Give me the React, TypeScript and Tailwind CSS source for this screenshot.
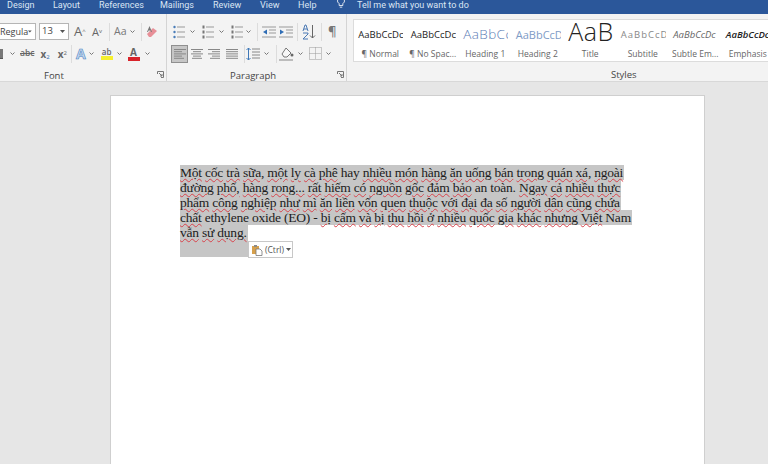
import React from 'react';

const tabs = [
  { label: 'Design', cls: 'w-[46px]' },
  { label: 'Layout', cls: 'w-[46px]' },
  { label: 'References', cls: 'w-[61px]' },
  { label: 'Mailings', cls: 'w-[53px]' },
  { label: 'Review', cls: 'w-[47px]' },
  { label: 'View', cls: 'w-[38px]' },
  { label: 'Help', cls: 'w-[38px]' },
];

const styleItems = [
  { sample: 'AaBbCcDc', label: '¶ Normal', cls: 'pt-[2px] text-[9.5px] text-[#222]' },
  { sample: 'AaBbCcDc', label: '¶ No Spac...', cls: 'pt-[2px] text-[9.5px] text-[#222]' },
  { sample: 'AaBbCc', label: 'Heading 1', cls: 'pt-[1px] text-[13.5px] font-light text-[#5b7db5] tracking-[0.4px]' },
  { sample: 'AaBbCcD', label: 'Heading 2', cls: 'pt-[1px] text-[11px] text-[#7e9bc6]' },
  { sample: 'AaB', label: 'Title', cls: 'pb-[6px] text-[25px] font-light text-[#222] tracking-[0.5px]' },
  { sample: 'AaBbCcD', label: 'Subtitle', cls: 'pt-[2px] text-[9.5px] text-[#888] tracking-[1px]' },
  { sample: 'AaBbCcDc', label: 'Subtle Em...', cls: 'pt-[2px] text-[9.5px] text-[#666] italic' },
  { sample: 'AaBbCcDc', label: 'Emphasis', cls: 'pt-[2px] text-[9.5px] text-[#222] italic font-semibold' },
];

const lines = [
  'Một cốc trà sữa, một ly cà phê hay nhiều món hàng ăn uống bán trong quán xá, ngoài',
  'đường phố, hàng rong... rất hiếm có nguồn gốc đảm bảo an toàn. Ngay cả nhiều thực',
  'phẩm công nghiệp như mì ăn liền vốn quen thuộc với đại đa số người dân cũng chứa',
  'chất ethylene oxide (EO) - bị cấm và bị thu hồi ở nhiều quốc gia khác nhưng Việt Nam',
  'vẫn sử dụng.',
];

// words the spell checker leaves alone
const plain = ['hay', 'ethylene', 'oxide', '(EO)', '-', 'Nam', 'an', 'toàn.'];

const Chev = ({ cls = '' }: { cls?: string }) => (
  <svg width="7" height="4" viewBox="0 0 7 4" className={`shrink-0 ${cls}`}>
    <path d="M1.500 .5 3.500 2.500 5.500 .5" fill="none" stroke="#777" strokeWidth="1" />
  </svg>
);

const Sep = ({ cls = '' }: { cls?: string }) => <div className={`h-[18px] w-px shrink-0 bg-[#dcdcdc] ${cls}`} />;

// small list glyph used by the paragraph buttons
const ListIcon = ({ cls = '', nums = false }: { cls?: string; nums?: boolean }) => (
  <svg width="14" height="14" viewBox="0 0 14 14" className={`shrink-0 ${cls}`}>
    {[2, 7, 12].map((y) => (
      <g key={y}>
        {nums ? (
          <rect x="1.500" y={y - 1.5} width="2" height="3" fill="#777" />
        ) : (
          <circle cx="2.500" cy={y} r="1.200" fill="#4a7db8" />
        )}
        <path d={`M5 ${y}h8`} stroke="#999" strokeWidth="1" />
      </g>
    ))}
  </svg>
);

const AlignIcon = ({ rows, cls = '' }: { rows: string[]; cls?: string }) => (
  <svg width="14" height="12" viewBox="0 0 14 12" className={`shrink-0 ${cls}`}>
    {rows.map((d, i) => (
      <path key={i} d={`M${d}`} transform={`translate(0 ${i * 2.2 + 1.5})`} stroke="#888" strokeWidth="1" />
    ))}
  </svg>
);

const IndentIcon = ({ cls = '', flip = false }: { cls?: string; flip?: boolean }) => (
  <svg width="14" height="12" viewBox="0 0 14 12" className={`shrink-0 ${cls}`}>
    <path d="M0 1h14M7 4h7M7 7h7M0 11h14" stroke="#999" strokeWidth="1" />
    <path d={flip ? 'M1 3.500 5 6 1 8.500z' : 'M5 3.500 1 6 5 8.500z'} fill="#2f6db5" />
  </svg>
);

const Launcher = () => (
  <svg width="7" height="7" viewBox="0 0 7 7" className="absolute right-[2px] bottom-[3px]">
    <path d="M.5 3V.5H6.500V6.500H4M2 2l3 3M5 3v2H3" fill="none" stroke="#777" strokeWidth="1" />
  </svg>
);

const Line = ({ text }: { text: string }) => {
  const words = text.split(' ');
  return (
    <div className="w-fit bg-[#c6c6c6] pr-px">
      {words.map((w, i) => (
        <span key={i}>
          <span className={plain.includes(w) ? '' : 'underline decoration-wavy decoration-[#d8434b] decoration-1 underline-offset-1'}>{w}</span>
          {i < words.length - 1 ? ' ' : ''}
        </span>
      ))}
    </div>
  );
};

export default function App() {
  return (
    <div className="flex h-[464px] w-[768px] flex-col overflow-hidden bg-[#e6e6e6] font-['Open_Sans','Noto_Sans',sans-serif]">
      {/* tab strip, cut off at the top of the shot */}
      <div className="flex h-[14px] shrink-0 items-center bg-[#2b579a] pl-[7px] font-['Roboto',sans-serif] text-[9px] leading-none text-[#dce6f4]">
        {tabs.map((t) => (
          <div key={t.label} className={`${t.cls} -mt-1`}>
            {t.label}
          </div>
        ))}
        <svg width="10" height="14" viewBox="0 0 12 16" className="-mt-2 shrink-0">
          <path d="M6 1a4.200 4.200 0 0 0-2.200 7.800V11h4.400V8.800A4.200 4.200 0 0 0 6 1zM4.500 13h3" fill="none" stroke="#fff" strokeWidth="1" />
        </svg>
        <div className="-mt-1 ml-[11px]">Tell me what you want to do</div>
      </div>

      {/* ribbon */}
      <div className="flex h-[68px] shrink-0 border-b border-[#d8d8d8] bg-[#f3f3f3] text-[#444]">
        {/* Font */}
        <div className="relative flex w-[167px] shrink-0 flex-col border-r border-[#d4d4d4]">
          <div className="mt-[9px] flex h-[17px] items-center">
            <div className="flex h-[17px] w-[36px] items-center justify-between border border-l-0 border-[#b5b5b5] bg-white pr-[3px] text-[9px]">
              Regula
              <svg width="5" height="3" viewBox="0 0 5 3"><path d="M0 0h5L2.500 3z" fill="#555" /></svg>
            </div>
            <div className="ml-[3px] flex h-[17px] w-[30px] items-center justify-between border border-[#b5b5b5] bg-white px-[2px] pr-[3px] text-[9.5px]">
              13
              <svg width="5" height="3" viewBox="0 0 5 3"><path d="M0 0h5L2.500 3z" fill="#555" /></svg>
            </div>
            <span className="ml-[5px] w-[18px] text-[13px] leading-none text-[#666]">A<sup className="text-[6px]">^</sup></span>
            <span className="w-[14px] text-[11px] leading-none text-[#666]">A<sup className="text-[6px]">v</sup></span>
            <Sep cls="ml-[3px]" />
            <span className="ml-[4px] text-[10.5px] leading-none text-[#777]">Aa</span>
            <Chev cls="ml-[3px]" />
            <Sep cls="ml-[5px]" />
            <svg width="14" height="14" viewBox="0 0 14 14" className="ml-[3px] shrink-0">
              <path d="M2 9 8 3l4 3-6 6H4z" fill="#e78f97" />
              <path d="M4.500 1 2 7h1l.6-1.500h2L6 7h1z" fill="#777" />
            </svg>
          </div>
          <div className="mt-[4px] flex h-[19px] items-center">
            <div className="h-[10px] w-[3px] border-b border-[#555] bg-[#777]" />
            <Chev cls="ml-[6px]" />
            <span className="ml-[4px] text-[8.5px] font-semibold leading-none text-[#666] line-through">abc</span>
            <span className="ml-[6px] text-[10px] font-bold leading-none text-[#666]">x<sub className="text-[6px] font-normal text-[#2f6db5]">2</sub></span>
            <span className="ml-[8px] text-[10px] font-bold leading-none text-[#666]">x<sup className="text-[6px] font-normal">2</sup></span>
            <Sep cls="ml-[4px]" />
            <span className="ml-[4px] text-[14px] font-bold leading-none text-[#c4d8f0] [-webkit-text-stroke:0.6px_#4a82c0]">A</span>
            <Chev cls="ml-[2px]" />
            <div className="ml-[6px] flex w-[12px] flex-col items-center">
              <span className="text-[8px] font-semibold leading-[9px] text-[#666]">ab</span>
              <div className="h-[4px] w-[12px] bg-[#f5f02e]" />
            </div>
            <Chev cls="ml-[3px]" />
            <div className="ml-[5px] flex w-[12px] flex-col items-center">
              <span className="text-[10px] font-bold leading-[10px] text-[#666]">A</span>
              <div className="h-[4px] w-[12px] bg-[#d8232a]" />
            </div>
            <Chev cls="ml-[4px]" />
          </div>
          <div className="mt-[8px] pl-[44px] text-[9.5px] leading-none">Font</div>
          <Launcher />
        </div>

        {/* Paragraph */}
        <div className="relative flex w-[180px] shrink-0 flex-col border-r border-[#d4d4d4]">
          <div className="mt-[9px] flex h-[17px] items-center">
            <ListIcon cls="ml-[5px]" />
            <Chev cls="ml-[3px]" />
            <ListIcon cls="ml-[5px]" nums />
            <Chev cls="ml-[3px]" />
            <ListIcon cls="ml-[5px]" nums />
            <Chev cls="ml-[1px]" />
            <Sep cls="ml-[5px]" />
            <IndentIcon cls="ml-[4px]" />
            <IndentIcon cls="ml-[3px]" flip />
            <Sep cls="ml-[4px]" />
            <svg width="14" height="16" viewBox="0 0 14 16" className="ml-[4px] shrink-0">
              <path d="M10.500 1v13M8 11.500l2.500 2.500 2.500-2.500" fill="none" stroke="#666" strokeWidth="1" />
              <path d="M1 7 3 1h1l2 6M2 5h3M1 9h5v1L1 15h5" fill="none" stroke="#4a79b4" strokeWidth="1" />
            </svg>
            <Sep cls="ml-[5px]" />
            <span className="ml-[6px] text-[13px] font-semibold leading-none text-[#777]">¶</span>
          </div>
          <div className="mt-[4px] flex h-[19px] items-center">
            <div className="ml-[4px] flex h-[18px] w-[17px] shrink-0 items-center justify-center border border-[#8f8f8f] bg-[#c6c6c6]">
              <AlignIcon rows={['1 0h12', '1 0h8', '1 0h12', '1 0h8', '1 0h10']} />
            </div>
            <AlignIcon cls="ml-[2px]" rows={['1 0h12', '3 0h8', '1 0h12', '3 0h8', '2 0h10']} />
            <AlignIcon cls="ml-[3px]" rows={['1 0h12', '5 0h8', '1 0h12', '5 0h8', '3 0h10']} />
            <AlignIcon cls="ml-[4px]" rows={['1 0h12', '1 0h12', '1 0h12', '1 0h12', '1 0h12']} />
            <Sep cls="ml-[5px]" />
            <svg width="14" height="14" viewBox="0 0 14 14" className="ml-[1px] shrink-0">
              <path d="M2.500 1v12M.5 3l2-2 2 2M.5 11l2 2 2-2" fill="none" stroke="#3f78b8" strokeWidth="1" />
              <path d="M6 2h8M6 5h8M6 8h8M6 11h8" stroke="#888" strokeWidth="1" />
            </svg>
            <Chev cls="ml-[3px]" />
            <Sep cls="ml-[6px]" />
            <svg width="16" height="15" viewBox="0 0 16 15" className="ml-[2px] shrink-0">
              <path d="M3 8 7 2l5 5-4 4H5z" fill="#f7f7f7" stroke="#777" />
              <circle cx="13" cy="9" r="1.500" fill="#666" />
              <path d="M0 14h14" stroke="#aaa" strokeWidth="1.500" />
            </svg>
            <Chev cls="ml-[2px]" />
            <svg width="13" height="13" viewBox="0 0 13 13" className="ml-[5px] shrink-0">
              <path d="M.5.5h12v12H.5zM6.500.5v12M.5 6.500h12" fill="none" stroke="#999" strokeWidth="1" strokeDasharray="1 1" />
            </svg>
            <Chev cls="ml-[3px]" />
          </div>
          <div className="mt-[8px] pl-[63px] text-[9.5px] leading-none">Paragraph</div>
          <Launcher />
        </div>

        {/* Styles */}
        <div className="flex min-w-0 flex-1 flex-col pl-[6px]">
          <div className="mt-[5px] flex h-[43px] overflow-hidden border border-r-0 border-[#dcdcdc] bg-white">
            {styleItems.map((s) => (
              <div key={s.label} className="flex w-[52.500px] shrink-0 flex-col items-center overflow-hidden">
                <div className={`flex h-[28px] w-[46px] items-center justify-start overflow-hidden pl-[1px] leading-none whitespace-nowrap ${s.cls}`}>
                  {s.sample}
                </div>
                <div className="text-[8.5px] leading-[11px] whitespace-nowrap text-[#666]">{s.label}</div>
              </div>
            ))}
          </div>
          <div className="mt-[8px] pl-[258px] text-[9.500px] leading-none">Styles</div>
        </div>
      </div>

      {/* document area */}
      <div className="flex-1 pt-[13px] pl-[110px]">
        <div className="h-[400px] w-[595px] border border-[#cfcfcf] bg-white pt-[69px] pl-[69px] font-['Liberation_Serif',serif] text-[13.5px] leading-[15px] tracking-[-0.22px] text-[#1c1c1c]">
          <div className="relative w-fit">
            {lines.map((l) => (
              <Line key={l} text={l} />
            ))}
            <div className="h-[17px] w-[68px] bg-[#c6c6c6]" />
            {/* paste options button */}
            <div className="absolute top-[76px] left-[68px] flex h-[17px] w-[45px] items-center border border-[#c8c8c8] bg-white pl-[2px] font-['Open_Sans',sans-serif] text-[8.500px] tracking-normal text-[#555]">
              <svg width="12" height="12" viewBox="0 0 12 12" className="shrink-0">
                <path d="M1 2h7v8H1z" fill="#d6a04c" />
                <path d="M3 1h3v2H3z" fill="#8a8a8a" />
                <path d="M5 5h4l2 2v4.500H5z" fill="#fff" stroke="#777" strokeWidth="0.8" />
              </svg>
              <span className="ml-[2px]">(Ctrl)</span>
              <svg width="5" height="3" viewBox="0 0 5 3" className="ml-[2px]"><path d="M0 0h5L2.500 3z" fill="#555" /></svg>
            </div>
          </div>
        </div>
      </div>
    </div>
  );
}
